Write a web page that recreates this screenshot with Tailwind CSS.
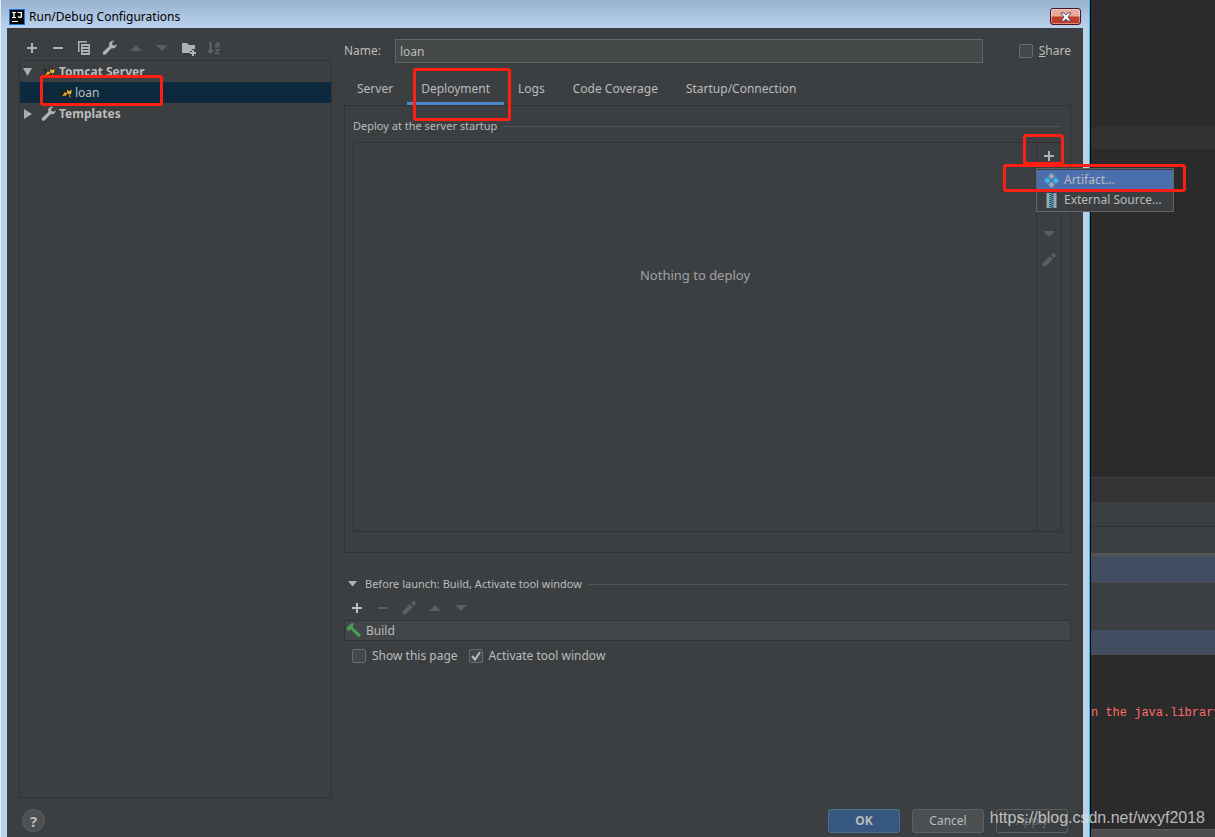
<!DOCTYPE html>
<html lang="en">
<head>
<meta charset="utf-8">
<title>Run/Debug Configurations</title>
<script src="https://cdn.jsdelivr.net/npm/@tailwindcss/browser@4"></script>
</head>
<body class="h-screen overflow-hidden bg-[#2b2b2b] font-['Noto_Sans','Open_Sans',sans-serif] text-[12px] leading-5 text-[#bbbbbb]">
<svg class="hidden">
  <defs>
    <symbol id="plus" viewBox="0 0 16 16"><path d="M7 3h2v4h4v2H9v4H7V9H3V7h4z" fill="currentColor"/></symbol>
    <symbol id="minus" viewBox="0 0 16 16"><path d="M3 7h10v2H3z" fill="currentColor"/></symbol>
    <symbol id="up" viewBox="0 0 16 16"><path d="M2 11l6-6 6 6z" fill="currentColor"/></symbol>
    <symbol id="down" viewBox="0 0 16 16"><path d="M2 5h12l-6 6z" fill="currentColor"/></symbol>
    <symbol id="pencil" viewBox="0 0 16 16"><path d="M1.500 11.500l7.500-7.500 3 3-7.500 7.500h-3zM10 3l1.500-1.500q1-.8 2 0l1 1q.8 1 0 2L13 6z" fill="currentColor"/></symbol>
    <symbol id="wrench" viewBox="0 0 16 16"><path d="M14.700 4.200l-2.600 1.600-2-1.200.1-2.200L12.600 1C10.800.3 8.600.9 7.600 2.600c-.6 1.100-.6 2.300-.2 3.400L1.300 11.700c-.7.700-.8 1.900-.1 2.600.8.800 2 .7 2.700-.1l5.600-6c1.700.5 3.600-.1 4.600-1.700.4-.7.6-1.500.6-2.300z" fill="currentColor"/></symbol>
    <symbol id="tomcat" viewBox="0 0 13 11"><path d="M0 2h2l2 2h3V1l2 1h2l2-1v5l-1 2 1 3h-3L9 9H5l-2 1H0l1-2 2-1-1-3z" fill="#211b10"/><path d="M4 5h3l1 2-2 1.500H3.500L2 9.500l.5-1.500L4 7zM7.500 1.500l1.500 1.500h2l1.500-1.500V6L10.500 7.500 8 6z" fill="#d9a936"/><path d="M8.500 4h1v1h-1zM11 4h1v1h-1z" fill="#fff3b5"/><path d="M9.500 8h1.500l1 2.500h-1.500z" fill="#c9982f"/></symbol>
  </defs>
</svg>

<div class="relative flex h-full">
  <!-- dialog window -->
  <div class="flex min-w-0 flex-1 flex-col border-r border-l border-r-[#35b9e8] border-l-[#e4edf7] bg-[#bad1ea]">
    <header class="flex h-7 shrink-0 items-center gap-1 bg-linear-to-b from-[#98b2cf] to-[#b9d1ec] pt-[5px] pr-2 pl-2 text-black">
      <svg class="size-4" viewBox="0 0 16 16"><path d="M0 0h16v16H0z" fill="#1474e8"/><path d="M1 1h14v14H1z" fill="#050608"/><path d="M3 3h4v1H5.700v4H7v1H3V8h1.300V4H3zM8.500 3H13v4.500Q13 9 11.300 9 9.500 9 8.500 8l.8-1q.7.8 1.500.8.900 0 .9-1V4H8.500zM3 12h6v1H3z" fill="#fff"/></svg>
      <h1 class="flex-1">Run/Debug Configurations</h1>
      <button aria-label="Close" class="grid h-[17px] w-[31px] place-items-center rounded-[3px] border border-[#431421] bg-linear-to-b from-[#eaa79c] from-45% to-[#bf3d28] to-55% shadow-[inset_0_0_0_1px_#ffffff66]">
        <svg class="h-[10px] w-3" viewBox="0 0 12 10"><path d="M1 1h3l2 2 2-2h3L8 5l3 4H8L6 7 4 9H1l3-4z" fill="#fff" stroke="#4b4f60" stroke-width=".9"/></svg>
      </button>
    </header>

    <div class="mx-[6px] flex min-h-0 flex-1 flex-col bg-[#3c3f41]">
      <div class="flex min-h-0 flex-1">
        <!-- configuration tree -->
        <aside class="ml-3 flex w-[313px] shrink-0 flex-col">
          <div class="flex h-8 items-center gap-[10px] pt-2 pl-[5px] text-[#afb1b3]">
            <button aria-label="Add"><svg class="block size-4"><use href="#plus"/></svg></button>
            <button aria-label="Remove"><svg class="block size-4"><use href="#minus"/></svg></button>
            <button aria-label="Copy"><svg class="block size-4" viewBox="0 0 16 16"><path d="M2 1h9v1.500H3.500V12H2zM5 4h9v11H5zM6.500 6v1h6V6zm0 3v1h6V9zm0 3v1h6v-1z" fill="currentColor" fill-rule="evenodd"/></svg></button>
            <button aria-label="Edit defaults"><svg class="block size-4"><use href="#wrench"/></svg></button>
            <button aria-label="Move up" class="text-[#5b5d5f]"><svg class="block size-4"><use href="#up"/></svg></button>
            <button aria-label="Move down" class="text-[#5b5d5f]"><svg class="block size-4"><use href="#down"/></svg></button>
            <button aria-label="New folder"><svg class="block size-4" viewBox="0 0 16 16"><path d="M2 3h5l2 2h6v4h-3v2h-2v2H2zM12 10h2v2h2v2h-2v2h-2v-2h-2v-2h2z" fill="currentColor"/></svg></button>
            <button aria-label="Sort" class="text-[#636567]"><svg class="block size-4" viewBox="0 0 16 16"><path d="M3.500 2h2v8H8l-3.500 4L1 10h2.500z" fill="currentColor"/><path d="M9.500 3.300q3.500-1.200 3.500 1V7m0-2q-3.500-.3-3.500 1.200 0 1.500 3.500.2M9.500 9.700H13l-3.500 4H13.500" fill="none" stroke="currentColor" stroke-width="1.200"/></svg></button>
          </div>
          <ul class="flex-1 border border-[#323232]">
            <li class="flex h-[21px] items-center pl-[3px] font-bold">
              <svg class="mr-[11px] size-[9px]" viewBox="0 0 9 9"><path d="M0 1h9L4.500 9z" fill="#adadad"/></svg>
              <svg class="mr-1 h-[10px] w-3"><use href="#tomcat"/></svg>Tomcat Server
            </li>
            <li class="relative flex h-[21px] items-center bg-[#0d293e] pl-[40px]">
              <svg class="mr-[3px] h-[10px] w-3"><use href="#tomcat"/></svg>loan
              <span class="absolute -top-[7px] left-5 h-[31px] w-[123px] rounded-[3px] border-3 border-[#ff1f12]"></span>
            </li>
            <li class="flex h-[21px] items-center pl-[3px] font-bold">
              <svg class="mr-2 size-[10px]" viewBox="0 0 10 10"><path d="M1 0v10l8-5z" fill="#adadad"/></svg>
              <svg class="mr-[2px] size-4 text-[#afb1b3]"><use href="#wrench"/></svg>Templates
            </li>
          </ul>
        </aside>

        <!-- configuration editor -->
        <main class="mr-3 ml-3 flex min-w-0 flex-1 flex-col pt-[11px]">
          <div class="flex h-6 items-center">
            <label for="name" class="w-[51px]">Name:</label>
            <input id="name" value="loan" class="h-6 min-w-0 flex-1 border border-[#646464] bg-[#45494a] px-1 text-[#bbbbbb] outline-none">
            <input id="share" type="checkbox" class="ml-9 size-[14px] appearance-none rounded-[2px] border border-[#6b6b6b] bg-[#43494a]">
            <label for="share" class="ml-[6px]"><u>S</u>hare</label>
          </div>

          <div role="tablist" class="-ml-px mt-[10px] flex h-8">
            <button role="tab" class="px-[14px]">Server</button>
            <button role="tab" aria-selected="true" class="relative border-b-3 border-[#4a88c7] px-[14px] pt-[3px]">Deployment
              <span class="absolute -top-[5px] left-[6px] z-10 h-[53px] w-[98px] rounded-[3px] border-3 border-[#ff1f12]"></span>
            </button>
            <button role="tab" class="px-[14px]">Logs</button>
            <button role="tab" class="px-[14px]">Code Coverage</button>
            <button role="tab" class="px-[14px]">Startup/Connection</button>
          </div>

          <section class="border border-[#323232] px-2 pt-[10px] pb-5">
            <h2 class="flex h-5 items-center gap-[6px] text-[11px] after:mr-[2px] after:h-px after:flex-1 after:bg-[#515355]">Deploy at the server startup</h2>
            <div class="mt-[6px] flex h-[390px] border border-[#323232]">
              <div class="flex-1 pt-[122px] text-center text-[13px] text-[#a0a2a4]">Nothing to deploy</div>
              <div class="relative flex w-[25px] flex-col items-center gap-[10px] border-l border-[#323232] pt-[5px] text-[#5b5d5f]">
                <button aria-label="Add" class="text-[#afb1b3]"><svg class="block size-4"><use href="#plus"/></svg></button>
                <button aria-label="Remove"><svg class="block size-4"><use href="#minus"/></svg></button>
                <button aria-label="Move up"><svg class="block size-4"><use href="#up"/></svg></button>
                <button aria-label="Move down"><svg class="block size-4"><use href="#down"/></svg></button>
                <button aria-label="Edit"><svg class="block size-4"><use href="#pencil"/></svg></button>
                <span class="absolute -top-[9px] -left-[14px] z-20 h-[31px] w-[41px] rounded-[3px] border-3 border-[#ff1f12]"></span>
                <span class="absolute top-[21px] -left-[34px] z-20 h-[28px] w-[183px] rounded-[3px] border-3 border-[#ff1f12]"></span>
                <div role="menu" class="absolute top-[25px] -left-px z-10 w-[138px] border border-[#616365] bg-[#3c3f41] py-px text-[#bbbbbb]">
                  <button role="menuitem" class="flex h-5 w-full items-center gap-[5px] bg-[#4b6eaf] pl-[7px]">
                    <svg class="size-[15px]" viewBox="0 0 16 16"><path d="M8 1l2.500 2.500L8 6 5.500 3.500zM8 10l2.500 2.500L8 15 5.500 12.500z" fill="#9aa7b0" stroke="#9aa7b0" stroke-width="1.500" stroke-linejoin="round"/><path d="M3.500 5.500L6 8 3.500 10.500 1 8zM12.500 5.500L15 8 12.500 10.500 10 8z" fill="#40b6e0" stroke="#40b6e0" stroke-width="1.500" stroke-linejoin="round"/></svg>Artifact...
                  </button>
                  <button role="menuitem" class="flex h-5 w-full items-center gap-[5px] pl-[7px]">
                    <svg class="size-[15px]" viewBox="0 0 15 15"><path d="M2.500 0h3v15h-3zM9.500 0h3v15h-3z" fill="#9aa7b0"/><path d="M6.500 0v15M8.500 1v14" stroke="#40b6e0" stroke-width="2" stroke-dasharray="1 1"/></svg><span class="whitespace-nowrap">External Source...</span>
                  </button>
                </div>
              </div>
            </div>
          </section>

          <section class="mt-[21px]">
            <h2 class="flex h-5 items-center text-[11px] after:mr-[3px] after:ml-[6px] after:h-px after:flex-1 after:bg-[#515355]">
              <svg class="mr-2 ml-1 h-[6px] w-[9px]" viewBox="0 0 9 6"><path d="M0 0h9L4.500 5.500z" fill="#afb1b3"/></svg>Before launch: Build, Activate tool window
            </h2>
            <div class="flex h-[26px] items-center gap-[10px] pt-px pl-[5px] text-[#5b5d5f]">
              <button aria-label="Add task" class="text-[#bbbdbf]"><svg class="block size-4"><use href="#plus"/></svg></button>
              <button aria-label="Remove task"><svg class="block size-4"><use href="#minus"/></svg></button>
              <button aria-label="Edit task"><svg class="block size-4"><use href="#pencil"/></svg></button>
              <button aria-label="Move task up"><svg class="block size-4"><use href="#up"/></svg></button>
              <button aria-label="Move task down"><svg class="block size-4"><use href="#down"/></svg></button>
            </div>
            <div class="flex h-[21px] items-center gap-[5px] border border-[#323232] bg-[#434648] pl-px">
              <svg class="size-[15px]" viewBox="0 0 15 15"><path d="M0 5.500L5 .5Q7.500-.2 8.500.8L7 2.500v2L15 12l-2.500 2.500L5 6.500 2.500 8z" fill="#499c54"/></svg>Build
            </div>
            <div class="flex h-[29px] items-center pl-2">
              <input id="show" type="checkbox" class="size-[14px] appearance-none rounded-[2px] border border-[#6b6b6b] bg-[#43494a]">
              <label for="show" class="ml-[6px]">Show this page</label>
              <span class="ml-[11px] grid size-[14px]">
                <input id="activate" type="checkbox" checked class="col-start-1 row-start-1 size-[14px] appearance-none rounded-[2px] border border-[#6b6b6b] bg-[#43494a]">
                <svg class="pointer-events-none col-start-1 row-start-1 size-[14px]" viewBox="0 0 14 14"><path d="M3 7l3 3.500L11 3" fill="none" stroke="#bbb" stroke-width="2"/></svg>
              </span>
              <label for="activate" class="ml-[6px]">Activate tool window</label>
            </div>
          </section>
        </main>
      </div>

      <footer class="flex h-[39px] shrink-0 items-start gap-3 pt-[11px] pr-[15px] pl-[15px]">
        <button aria-label="Help" class="mr-auto size-[23px] rounded-full border border-[#5e6060] bg-[#4c5052] text-[15px] leading-5 font-bold">?</button>
        <button class="h-6 w-[72px] rounded-[3px] border border-[#4c708c] bg-[#365880] font-bold">OK</button>
        <button class="h-6 w-[72px] rounded-[3px] border border-[#5e6060] bg-[#4c5052]">Cancel</button>
        <button class="h-6 w-[72px] rounded-[3px] border border-[#5e6060] text-[#6c6e70]">Apply</button>
      </footer>
    </div>
  </div>

  <!-- editor window behind the dialog -->
  <div class="flex w-[125px] shrink-0 flex-col overflow-hidden border-l border-black bg-[#2b2b2b]">
    <div class="h-[127px]"></div>
    <div class="h-[22px] bg-[#323232]"></div>
    <div class="h-[328px]"></div>
    <div class="h-[25px] border-t border-[#3f4143] bg-[#313335]"></div>
    <div class="h-[25px] border-b border-[#2f3133] bg-[#3c3f41]"></div>
    <div class="h-[26px] bg-[#3c3f41]"></div>
    <div class="h-1 bg-[#515457]"></div>
    <div class="h-[26px] border-b border-[#4b4d4d] bg-[#414d60]"></div>
    <div class="h-[47px] bg-[#3c3f41]"></div>
    <div class="h-[25px] border-b border-[#4b4d4d] bg-[#414d60]"></div>
    <p class="mt-12 font-['Liberation_Mono',monospace] text-[12px] whitespace-nowrap text-[#ff6b68]">n the java.library</p>
    <div class="mt-auto h-2 border-t border-[#5a5c5e] bg-[#4b4d4f]"></div>
  </div>

  <p class="absolute right-[10px] bottom-[9px] font-['Liberation_Sans',Arial,sans-serif] text-[16px] text-[#e0e0e0]/80">https://blog.csdn.net/wxyf2018</p>
</div>
</body>
</html>
